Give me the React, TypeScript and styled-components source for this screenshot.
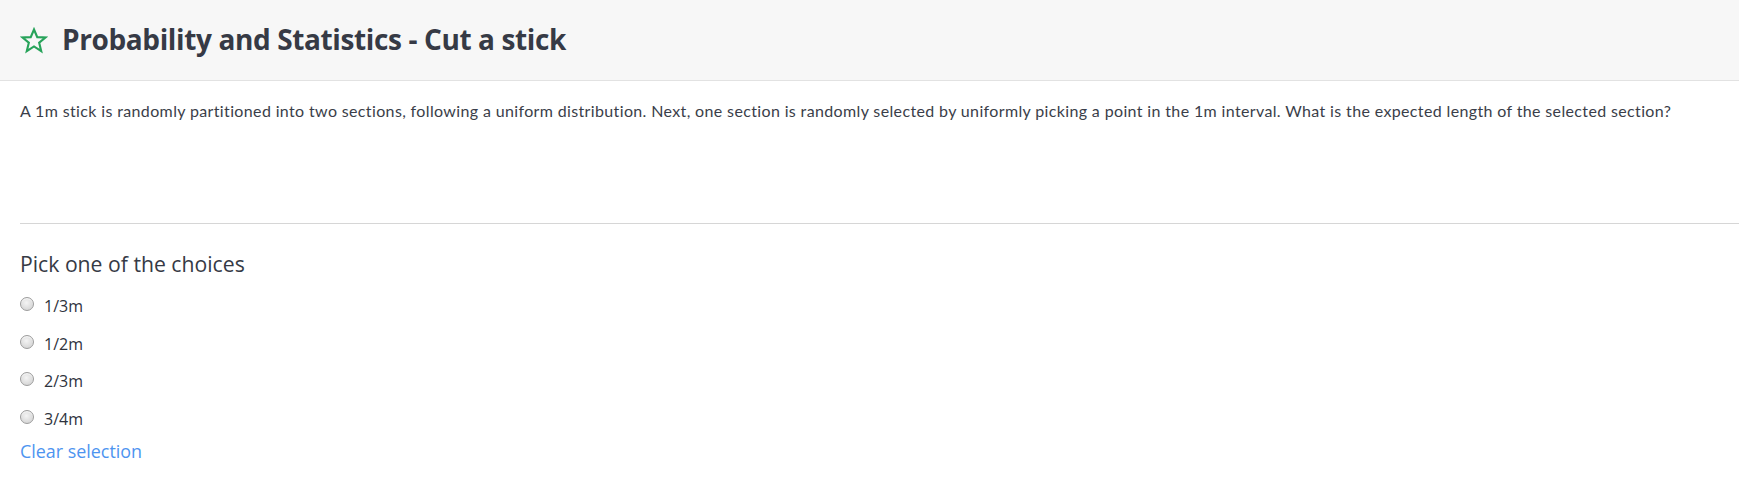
import React from "react";
import styled, { createGlobalStyle } from "styled-components";

const Global = createGlobalStyle`
  html, body { margin: 0; padding: 0; background: #ffffff; }
  body { font-family: Lato, "Noto Sans", sans-serif; color: #363a45; }
`;

const Header = styled.header`
  display: flex;
  align-items: center;
  gap: 14px;
  height: 80px;
  padding-left: 20px;
  background: #f7f7f7;
  border-bottom: 1px solid #e2e2e2;
`;

const Title = styled.h1`
  margin: 0;
  font-family: "Open Sans", "Noto Sans", sans-serif;
  font-weight: 700;
  font-size: 28px;
  letter-spacing: -0.38px;
  color: #363a45;
  line-height: 1;
  padding-bottom: 2px;
`;

const Body = styled.main`
  padding-left: 20px;
`;

const Question = styled.p`
  margin: 20px 0 102px;
  font-size: 16px;
  letter-spacing: 0.36px;
  line-height: 20px;
  color: #3a3e49;
`;

const Divider = styled.hr`
  margin: 0;
  border: 0;
  border-top: 1px solid #d6d6d6;
`;

const Heading = styled.h2`
  margin: 26px 0 9px;
  font-family: "Open Sans", "Noto Sans", sans-serif;
  font-weight: 400;
  font-size: 21.2px;
  line-height: 28px;
  color: #363a45;
`;

const Choices = styled.div`
  display: flex;
  flex-direction: column;
`;

const Choice = styled.label`
  display: flex;
  align-items: center;
  gap: 10px;
  height: 37.7px;
  font-family: "Open Sans", "Noto Sans", sans-serif;
  font-size: 16px;
  color: #2f333d;
  cursor: pointer;
`;

const Radio = styled.input.attrs({ type: "radio" })`
  appearance: none;
  margin: 0 0 4px 0;
  width: 14px;
  height: 14px;
  border-radius: 50%;
  border: 1px solid #9c9c9c;
  background: radial-gradient(circle at 45% 40%, #f4f4f4 0%, #dcdcdc 60%, #cfcfcf 100%);
  box-shadow: inset 0 1px 1px rgba(255,255,255,0.8);
  &:checked {
    background: radial-gradient(circle, #333 0 3px, #e6e6e6 4px);
  }
`;

const ClearLink = styled.a`
  display: inline-block;
  margin-top: 1px;
  font-family: "Open Sans", "Noto Sans", sans-serif;
  font-size: 17.9px;
  line-height: 24px;
  color: #4d94f0;
  text-decoration: none;
  cursor: pointer;
`;

const Star = () => (
  <svg width="28" height="27" viewBox="0 0 24 24" fill="none" stroke="#27a35a" strokeWidth="1.9" strokeLinejoin="miter">
    <polygon points="12,2.2 14.9,9 22.2,9.3 16.6,14 18.4,21.4 12,17.3 5.6,21.4 7.4,14 1.8,9.3 9.1,9" />
  </svg>
);

const options = ["1/3m", "1/2m", "2/3m", "3/4m"];

export default function App() {
  const [sel, setSel] = React.useState<string | null>(null);
  return (
    <>
      <Global />
      <Header>
        <Star />
        <Title>Probability and Statistics - Cut a stick</Title>
      </Header>
      <Body>
        <Question>
          A 1m stick is randomly partitioned into two sections, following a uniform distribution. Next, one section is randomly selected by uniformly picking a point in the 1m interval. What is the expected length of the selected section?
        </Question>
        <Divider />
        <Heading>Pick one of the choices</Heading>
        <Choices>
          {options.map((o) => (
            <Choice key={o}>
              <Radio name="choice" checked={sel === o} onChange={() => setSel(o)} />
              {o}
            </Choice>
          ))}
        </Choices>
        <ClearLink onClick={() => setSel(null)}>Clear selection</ClearLink>
      </Body>
    </>
  );
}
